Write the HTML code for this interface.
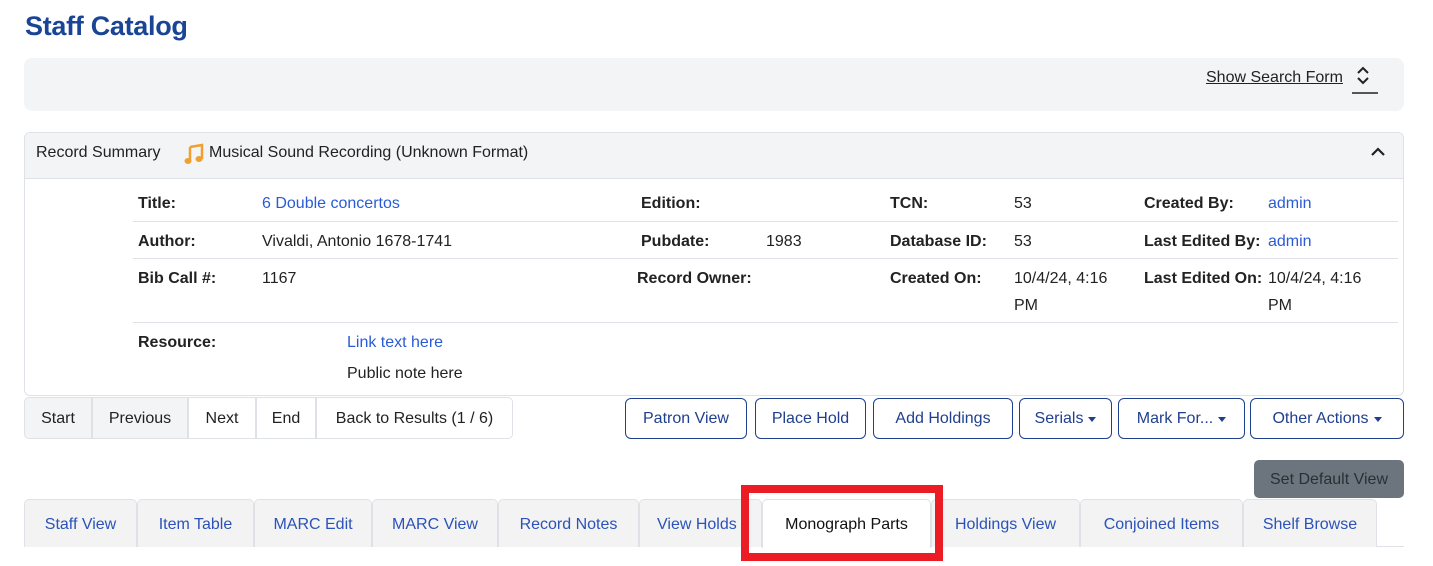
<!DOCTYPE html>
<html><head><meta charset="utf-8"><style>
*{box-sizing:border-box;margin:0;padding:0}
body{width:1433px;height:566px;background:#fff;font-family:"Liberation Sans",sans-serif;font-size:16px;color:#222;position:relative;overflow:hidden}
.a{position:absolute;white-space:nowrap}
.b{font-weight:bold;color:#222}
.l{color:#2a5bd7}
.h{position:absolute;left:133px;width:1265px;height:1px;background:#dee2e6}
.btn{position:absolute;top:398px;height:41px;border:1px solid #1f3f8f;border-radius:6px;color:#1f3f8f;display:flex;align-items:center;justify-content:center;font-size:16px;padding-top:1px}
.car{display:inline-block;width:0;height:0;border-left:4px solid transparent;border-right:4px solid transparent;border-top:5px solid #1f3f8f;margin-left:5px}
.pg{position:absolute;top:397px;height:42px;border:1px solid #dee2e6;display:flex;align-items:center;justify-content:center;color:#222;margin-left:-1px;padding-top:1px}
.tab{position:absolute;top:499px;height:48px;border:1px solid #dee2e6;border-bottom:none;border-radius:5px 5px 0 0;background:#f3f3f3;color:#2b52b8;display:flex;align-items:center;justify-content:center;margin-left:-1px;padding-top:2px}
</style></head><body>
<div class="a" style="left:25px;top:11px;font-size:27px;font-weight:bold;color:#1a4596;letter-spacing:-0.3px">Staff Catalog</div>
<div class="a" style="left:24px;top:58px;width:1380px;height:53px;background:#f3f4f6;border-radius:8px"></div>
<div class="a" style="left:1206px;top:69px;text-decoration:underline;color:#222">Show Search Form</div>
<svg class="a" style="left:1352px;top:66px" width="26" height="30" viewBox="0 0 26 30"><path d="M6 7l5-5 5 5M6 12l5 5 5-5" fill="none" stroke="#222" stroke-width="2"/><line x1="0" y1="27" x2="26" y2="27" stroke="#222" stroke-width="1.5"/></svg>

<div class="a" style="left:24px;top:132px;width:1380px;height:264px;border:1px solid #dee2e6;border-radius:6px;overflow:hidden">
<div style="height:46px;background:#f3f4f6;border-bottom:1px solid #dee2e6"></div></div>
<div class="a" style="left:36px;top:144px;color:#222">Record Summary</div>
<svg class="a" style="left:182px;top:142px" width="24" height="24" viewBox="0 0 24 24"><path d="M8 5l12-2v14" fill="none" stroke="#f0a030" stroke-width="2.5"/><ellipse cx="6" cy="19" rx="3.5" ry="3" fill="#f0a030"/><ellipse cx="17" cy="17" rx="3.5" ry="3" fill="#f0a030"/><path d="M8 5v14" stroke="#f0a030" stroke-width="2.5"/></svg>
<div class="a" style="left:209px;top:144px">Musical Sound Recording (Unknown Format)</div>
<svg class="a" style="left:1370px;top:146px" width="16" height="12" viewBox="0 0 16 12"><path d="M2 9l6-6 6 6" fill="none" stroke="#222" stroke-width="2.2"/></svg>

<div class="a b" style="left:138px;top:195px">Title:</div><div class="a l" style="left:262px;top:195px">6 Double concertos</div>
<div class="a b" style="left:641px;top:195px">Edition:</div>
<div class="a b" style="left:890px;top:195px">TCN:</div><div class="a" style="left:1014px;top:195px">53</div>
<div class="a b" style="left:1144px;top:195px">Created By:</div><div class="a l" style="left:1268px;top:195px">admin</div>
<div class="h" style="top:221px"></div>
<div class="a b" style="left:138px;top:233px">Author:</div><div class="a" style="left:262px;top:233px">Vivaldi, Antonio 1678-1741</div>
<div class="a b" style="left:641px;top:233px">Pubdate:</div><div class="a" style="left:766px;top:233px">1983</div>
<div class="a b" style="left:890px;top:233px">Database ID:</div><div class="a" style="left:1014px;top:233px">53</div>
<div class="a b" style="left:1144px;top:233px">Last Edited By:</div><div class="a l" style="left:1268px;top:233px">admin</div>
<div class="h" style="top:258px"></div>
<div class="a b" style="left:138px;top:270px">Bib Call #:</div><div class="a" style="left:262px;top:270px">1167</div>
<div class="a b" style="left:637px;top:270px">Record Owner:</div>
<div class="a b" style="left:890px;top:270px">Created On:</div><div class="a" style="left:1014px;line-height:27px;top:265px">10/4/24, 4:16<br>PM</div>
<div class="a b" style="left:1144px;top:270px">Last Edited On:</div><div class="a" style="left:1268px;line-height:27px;top:265px">10/4/24, 4:16<br>PM</div>
<div class="h" style="top:322px"></div>
<div class="a b" style="left:138px;top:334px">Resource:</div>
<div class="a l" style="left:347px;top:334px">Link text here</div>
<div class="a" style="left:347px;top:365px">Public note here</div>

<div class="pg" style="left:25px;width:68px;background:#f3f4f6;border-radius:5px 0 0 5px">Start</div>
<div class="pg" style="left:93px;width:96px;background:#f3f4f6">Previous</div>
<div class="pg" style="left:189px;width:68px">Next</div>
<div class="pg" style="left:257px;width:60px">End</div>
<div class="pg" style="left:317px;width:197px;border-radius:0 5px 5px 0">Back to Results (1 / 6)</div>

<div class="btn" style="left:625px;width:122px">Patron View</div>
<div class="btn" style="left:755px;width:111px">Place Hold</div>
<div class="btn" style="left:873px;width:140px">Add Holdings</div>
<div class="btn" style="left:1019px;width:93px">Serials<span class="car"></span></div>
<div class="btn" style="left:1118px;width:127px">Mark For...<span class="car"></span></div>
<div class="btn" style="left:1250px;width:154px">Other Actions<span class="car"></span></div>

<div class="a" style="left:1254px;top:460px;width:150px;height:38px;background:#6c757d;border-radius:5px;color:#2a2f33;display:flex;align-items:center;justify-content:center;padding-top:2px">Set Default View</div>

<div class="a" style="left:25px;top:546px;width:1379px;height:1px;background:#dee2e6"></div>
<div class="tab" style="left:25px;width:113px">Staff View</div>
<div class="tab" style="left:138px;width:117px">Item Table</div>
<div class="tab" style="left:255px;width:118px">MARC Edit</div>
<div class="tab" style="left:373px;width:126px">MARC View</div>
<div class="tab" style="left:499px;width:141px">Record Notes</div>
<div class="tab" style="left:640px;width:123px;justify-content:flex-start;padding-left:17px;overflow:hidden">View Holds</div>
<div class="tab" style="left:763px;width:169px;background:#fff;color:#111;height:49px">Monograph Parts</div>
<div class="tab" style="left:932px;width:149px">Holdings View</div>
<div class="tab" style="left:1081px;width:163px">Conjoined Items</div>
<div class="tab" style="left:1244px;width:134px">Shelf Browse</div>
<div class="a" style="left:741px;top:485px;width:202px;height:76px;border:8px solid #ec1c24"></div>
</body></html>
